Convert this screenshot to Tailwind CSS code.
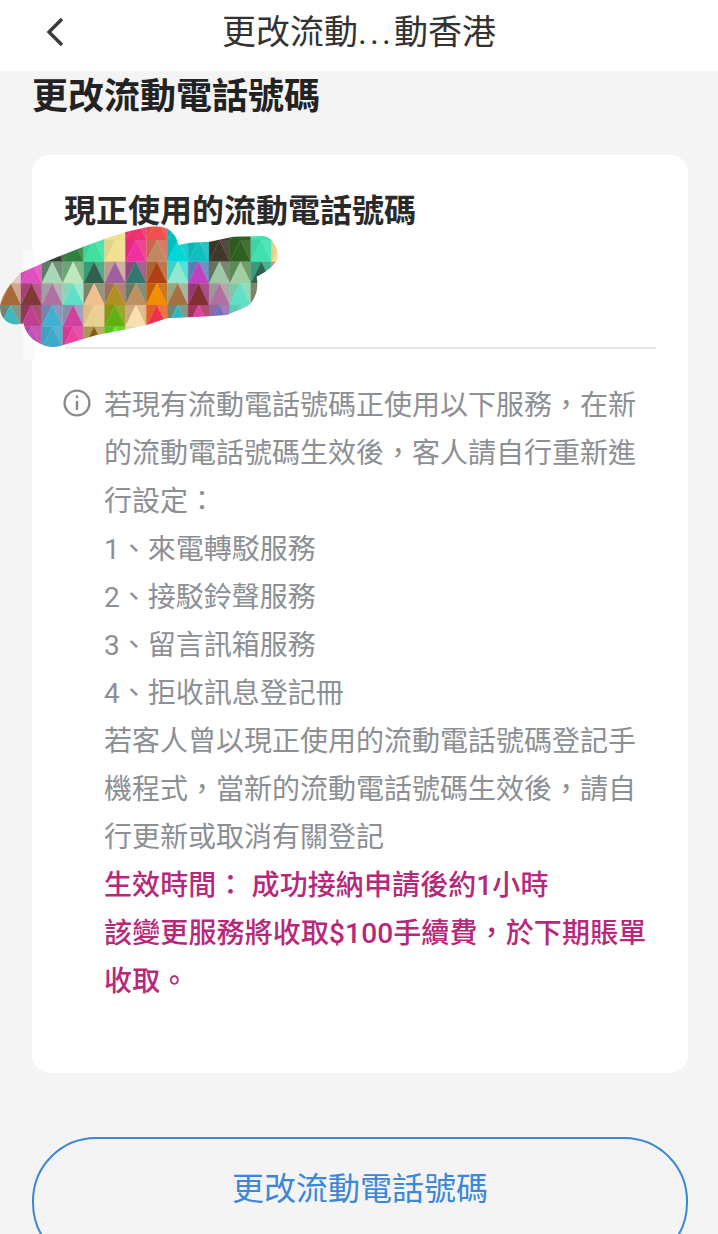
<!DOCTYPE html>
<html lang="zh-Hant">
<head>
<meta charset="UTF-8">
<meta name="viewport" content="width=device-width, initial-scale=1.0">
<title>更改流動電話號碼</title>
<script src="https://cdn.jsdelivr.net/npm/@tailwindcss/browser@4"></script>
</head>
<body class="bg-[#f4f4f4] font-['Roboto','Noto_Sans_CJK_TC',sans-serif]">
<div class="relative h-[1234px] overflow-hidden">
  <header class="flex h-[71px] items-center justify-center bg-white relative">
    <svg class="absolute left-[44px] top-[16px] h-[32px] w-[24px]" viewBox="0 0 24 32" fill="none" stroke="#3a3a3a" stroke-width="3.4"><path d="M18 3 L5 16 L18 29"/></svg>
    <h1 class="text-[34px] leading-none text-[#333] -mt-[8px]">更改流動<span class="tracking-[3px]">...</span>動香港</h1>
  </header>
  <h2 class="ml-[32px] mt-[3px] h-[81px] text-[36px] leading-[46px] font-bold text-[#222]">更改流動電話號碼</h2>

  <section class="ml-[32px] h-[918px] w-[656px] rounded-[18px] bg-white px-[33px] pt-[33px]">
    <h3 class="-ml-[1px] text-[32px] leading-[46px] font-bold text-[#2a2a2a]">現正使用的流動電話號碼</h3>
    <div class="mt-[113px] mr-[-1px] border-t-2 border-[#e8e8e8]"></div>
    <div class="mt-[33px] flex gap-[13px] text-[28px] leading-[48px] text-[#8c8f94]">
      <svg class="mt-[7px] h-[28px] w-[28px] shrink-0 -ml-[2px]" viewBox="0 0 28 28" fill="none" stroke="#8a8a8a" stroke-width="2.4">
        <circle cx="14" cy="14" r="12.4"/>
        <path d="M14 12 V21"/>
        <path d="M14 6.5 V9.2"/>
      </svg>
      <div class="w-[545px]">
        <p>若現有流動電話號碼正使用以下服務，在新的流動電話號碼生效後，客人請自行重新進行設定：</p>
        <p>1、來電轉駁服務</p>
        <p>2、接駁鈴聲服務</p>
        <p>3、留言訊箱服務</p>
        <p>4、拒收訊息登記冊</p>
        <p>若客人曾以現正使用的流動電話號碼登記手機程式，當新的流動電話號碼生效後，請自行更新或取消有關登記</p>
        <p class="font-medium tracking-[0.1px] text-[#b8287a]">生效時間： 成功接納申請後約1小時</p>
        <p class="font-medium tracking-[0.13px] text-[#b8287a]">該變更服務將收取$100手續費，於下期賬單收取。</p>
      </div>
    </div>
  </section>

  <button class="ml-[32px] mt-[64px] block h-[130px] w-[656px] rounded-[64px] border-2 border-[#3b87d9] pb-[26px] text-[32px] text-[#3b87d9]">更改流動電話號碼</button>

  <!-- redaction scribble over the phone number -->
  <div class="absolute left-[23px] top-[250px] h-[110px] w-[12px] bg-[#fafafa]"></div>
  <svg id="scribble" class="absolute left-0 top-[210px] h-[150px] w-[300px]" viewBox="0 0 900 450">
    <defs>
      <clipPath id="blob">
        <path d="M0 290 C5 250 30 225 60 190 L150 150 L250 110 L320 85 L380 65 L440 52 Q480 44 505 58 Q530 75 535 105 L570 98 L630 95 L700 80 L790 78 Q825 85 835 135 Q830 170 770 200 Q780 260 740 290 L680 315 L600 320 L500 325 L440 345 L370 360 L290 375 L190 405 Q150 420 110 395 Q80 380 70 340 Q35 350 15 330 Q0 315 0 290 Z"/>
      </clipPath>
    </defs>
    <g id="tris" clip-path="url(#blob)"></g>
  </svg>
</div>
<script>
  // colour of each row's middle triangle, column by column (rows start at y=25, 65 tall)
  var cols = [
    ['#e8c8c8','#e8c8c8','#e8c8c8','#a86838','#40b8c0','#40b8c0'],
    ['#e050c0','#e050c0','#e050c0','#803838','#c04090','#c050c0'],
    ['#304030','#304030','#a8d8b8','#b070a0','#40b0d0','#40a8c8'],
    ['#308040','#308040','#c0e8c0','#60e0c8','#d040a0','#f040a0'],
    ['#40e0a0','#40e0a0','#306050','#f0c090','#e8d090','#806010'],
    ['#f0e090','#f0e090','#a060a0','#b09020','#60b010','#60f030'],
    ['#f03070','#f030a0','#307870','#c09060','#f8e0b0','#f8e0b0'],
    ['#f05050','#c08860','#b04010','#f09000','#f03050','#f03050'],
    ['#00c0c0','#00d8d8','#90e8d0','#a87040','#30b8c0','#30b8c0'],
    ['#10c0c0','#10c0c0','#c040c0','#803030','#e040a0','#e040a0'],
    ['#403828','#403828','#a0c8a8','#b070a0','#7070c0','#7070c0'],
    ['#306020','#306020','#a0d0a0','#60e0c8','#60d0b0','#60d0b0'],
    ['#40e0b0','#40e0b0','#306050','#f0c090','#f0c090','#f0c090'],
    ['#f0e090','#f0e090','#e04080','#e04080','#e04080','#e04080']
  ];
  var g = document.getElementById('tris'), W = 62.7, H = 65, TOP = 25;
  function mix(a, b, t) {
    var out = '#';
    for (var i = 1; i < 7; i += 2) {
      var v = Math.round(parseInt(a.substr(i, 2), 16) * (1 - t) + parseInt(b.substr(i, 2), 16) * t);
      out += (v < 16 ? '0' : '') + v.toString(16);
    }
    return out;
  }
  function tri(pts, fill) {
    var t = document.createElementNS('http://www.w3.org/2000/svg', 'polygon');
    t.setAttribute('points', pts);
    t.setAttribute('fill', fill);
    t.setAttribute('stroke', fill);
    t.setAttribute('stroke-width', '0.6');
    g.appendChild(t);
  }
  cols.forEach(function (c, i) {
    var x0 = i * W, x1 = x0 + W, xm = x0 + W / 2;
    c.forEach(function (fill, k) {
      var y0 = TOP + k * H, y1 = y0 + H;
      // corners are tints between this row and the one above
      var above = c[Math.max(k - 1, 0)];
      tri(x0 + ',' + y0 + ' ' + x0 + ',' + y1 + ' ' + xm + ',' + y0, mix(mix(fill, above, 0.55), '#000000', 0.06));
      tri(x1 + ',' + y0 + ' ' + x1 + ',' + y1 + ' ' + xm + ',' + y0, mix(mix(fill, above, 0.55), '#ffffff', 0.1));
      tri(x0 + ',' + y1 + ' ' + x1 + ',' + y1 + ' ' + xm + ',' + y0, fill);
    });
  });
</script>
</body>
</html>
